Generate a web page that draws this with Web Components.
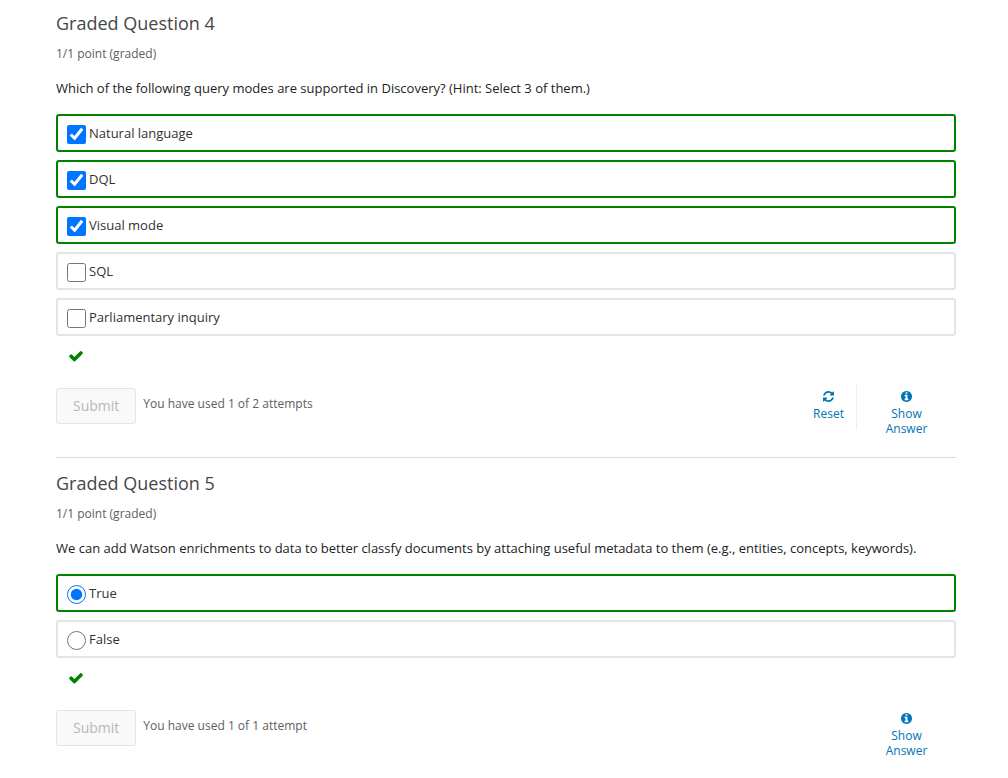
<!DOCTYPE html>
<html lang="en">
<head>
<meta charset="utf-8">
<title>Graded Questions</title>
<style>
body { margin: 0; background: #fff; color: #222; font: 13px/20px "Open Sans", sans-serif; }
main { padding: 11px 52px 16px 56px; }
</style>
</head>
<body>
<main>
  <graded-question heading="Graded Question 4" progress="1/1 point (graded)" attempts="You have used 1 of 2 attempts" resettable>
    <span slot="prompt">Which of the following query modes are supported in Discovery? (Hint: Select 3 of them.)</span>
    <answer-choice type="checkbox" name="modes" checked>Natural language</answer-choice>
    <answer-choice type="checkbox" name="modes" checked>DQL</answer-choice>
    <answer-choice type="checkbox" name="modes" checked>Visual mode</answer-choice>
    <answer-choice type="checkbox" name="modes">SQL</answer-choice>
    <answer-choice type="checkbox" name="modes">Parliamentary inquiry</answer-choice>
  </graded-question>
  <graded-question heading="Graded Question 5" progress="1/1 point (graded)" attempts="You have used 1 of 1 attempt">
    <span slot="prompt">We can add Watson enrichments to data to better classfy documents by attaching useful metadata to them (e.g., entities, concepts, keywords).</span>
    <answer-choice type="radio" name="enrich" checked>True</answer-choice>
    <answer-choice type="radio" name="enrich">False</answer-choice>
  </graded-question>
</main>

<template id="choice-template">
  <style>
    :host { display: block; }
    label { display: flex; align-items: center; gap: 3px; box-sizing: border-box; min-height: 38px; padding: 0 9px; border: 2px solid #e4e4e4; border-radius: 3px; color: #313131; }
    :host([checked]) label { border-color: #008100; }
    input { flex: none; width: 19px; height: 19px; margin: 2px 0 0; accent-color: #0075ff; }
  </style>
  <label><input><span><slot></slot></span></label>
</template>

<template id="action-template">
  <style>
    :host { display: block; }
    button { display: flex; flex-direction: column; align-items: center; box-sizing: border-box; width: 100%; min-height: 46px; padding: 7px 12px 0; border: 0; background: none; color: #0075b4; font: 12px/15px "Open Sans", sans-serif; cursor: pointer; }
    svg { display: block; width: 11px; height: 11px; margin-bottom: 4px; fill: currentColor; }
  </style>
  <button type="button"><svg viewBox="0 0 1536 1536" aria-hidden="true"><path></path></svg><span><slot></slot></span></button>
</template>

<template id="question-template">
  <style>
    :host { display: block; }
    :host([resettable]) { margin-bottom: 13px; padding-bottom: 21px; border-bottom: 1px solid #ddd; }
    h3 { margin: 0 0 11px; color: #474747; font-size: 18px; font-weight: 400; line-height: 24px; }
    .progress { margin-bottom: 16px; color: #5e5e5e; font-size: 12px; line-height: 16px; }
    p { margin: 0 0 16px; }
    fieldset { display: flex; flex-direction: column; gap: 8px; min-width: 0; margin: 0; padding: 0; border: 0; }
    .status { display: block; width: 16px; height: 16px; margin: 12px 0 20px 12px; fill: #008100; }
    .actions { display: flex; align-items: flex-start; }
    .submit { box-sizing: border-box; height: 36px; margin: 4px 7px 0 0; padding: 0 16px; border: 1px solid #e4e4e4; border-radius: 3px; background: #f9f9f9; color: #b8b8b8; font: 14px/20px "Open Sans", sans-serif; }
    .attempts { flex: 1; margin-top: 12px; color: #5e5e5e; font-size: 12px; line-height: 16px; }
    .reset { border-right: 1px solid #eee; }
    .show { width: 99px; text-align: center; }
  </style>
  <section>
    <h3></h3>
    <div class="progress"></div>
    <p><slot name="prompt"></slot></p>
    <fieldset><slot></slot></fieldset>
    <svg class="status" viewBox="0 0 1792 1792" role="img" aria-label="Correct"><path d="M1671 566q0 40-28 68l-724 724-136 136q-28 28-68 28t-68-28l-136-136-362-362q-28-28-28-68t28-68l136-136q28-28 68-28t68 28l294 295 656-657q28-28 68-28t68 28l136 136q28 28 28 68z"/></svg>
    <div class="actions">
      <button class="submit" type="button" disabled>Submit</button>
      <div class="attempts"></div>
      <icon-action class="reset" icon="refresh">Reset</icon-action>
      <icon-action class="show" icon="info">Show<br>Answer</icon-action>
    </div>
  </section>
</template>

<script>
const icons = {
  refresh: "M1511 928q0 5-1 7-64 268-268 434.500T764 1536q-146 0-282.500-55T238 1324l-129 129q-19 19-45 19t-45-19-19-45V960q0-26 19-45t45-19h448q26 0 45 19t19 45-19 45l-137 137q71 66 161 102t187 36q134 0 250-65t186-179q11-17 53-117 8-23 30-23h192q13 0 22.500 9.500t9.500 22.500zm25-800v448q0 26-19 45t-45 19h-448q-26 0-45-19t-19-45 19-45l138-138Q969 256 768 256q-134 0-250 65T332 500q-11 17-53 117-8 23-30 23H50q-13 0-22.500-9.500T18 608v-7q65-268 270-434.500T768 0q146 0 284 55.500T1297 212l130-129q19-19 45-19t45 19 19 45z",
  info: "M1024 1248v-160q0-14-9-23t-23-9h-96V544q0-14-9-23t-23-9H544q-14 0-23 9t-9 23v160q0 14 9 23t23 9h96v320h-96q-14 0-23 9t-9 23v160q0 14 9 23t23 9h448q14 0 23-9t9-23zM896 352V192q0-14-9-23t-23-9H672q-14 0-23 9t-9 23v160q0 14 9 23t23 9h192q14 0 23-9t9-23zm640 416q0 209-103 385.500T1153.500 1433 768 1536t-385.500-103T103 1153.500 0 768t103-385.500T382.500 103 768 0t385.500 103T1433 382.500 1536 768z"
};

class TemplateElement extends HTMLElement {
  render(id) {
    const root = this.attachShadow({ mode: "open" });
    root.append(document.getElementById(id).content.cloneNode(true));
    return root;
  }
}

class AnswerChoice extends TemplateElement {
  connectedCallback() {
    if (this.shadowRoot) return;
    const input = this.render("choice-template").querySelector("input");
    input.type = this.getAttribute("type");
    input.name = this.getAttribute("name");
    input.checked = this.hasAttribute("checked");
    input.addEventListener("change", () => {
      if (input.type === "radio") {
        for (const other of this.parentElement.querySelectorAll("answer-choice")) other.select(other === this);
      } else {
        this.select(input.checked);
      }
    });
  }
  select(on) {
    this.shadowRoot.querySelector("input").checked = on;
    this.toggleAttribute("checked", on);
  }
}

class IconAction extends TemplateElement {
  connectedCallback() {
    if (this.shadowRoot) return;
    this.render("action-template").querySelector("path").setAttribute("d", icons[this.getAttribute("icon")]);
  }
}

class GradedQuestion extends TemplateElement {
  connectedCallback() {
    if (this.shadowRoot) return;
    const root = this.render("question-template");
    root.querySelector("h3").textContent = this.getAttribute("heading");
    root.querySelector("fieldset").setAttribute("aria-label", this.getAttribute("heading"));
    root.querySelector(".progress").textContent = this.getAttribute("progress");
    root.querySelector(".attempts").textContent = this.getAttribute("attempts");
    if (!this.hasAttribute("resettable")) root.querySelector(".reset").remove();
  }
}

customElements.define("answer-choice", AnswerChoice);
customElements.define("icon-action", IconAction);
customElements.define("graded-question", GradedQuestion);
</script>
</body>
</html>
